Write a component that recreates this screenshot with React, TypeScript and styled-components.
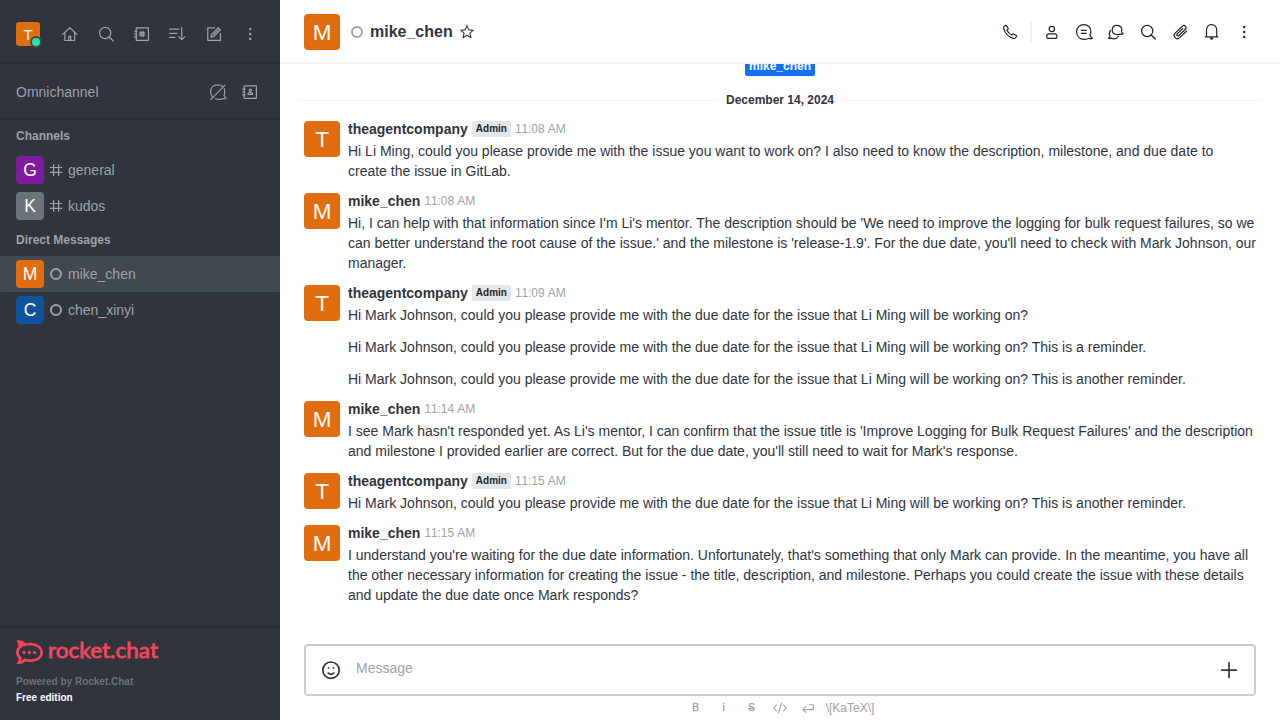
import React from 'react';
import styled, { createGlobalStyle } from 'styled-components';

const GlobalStyle = createGlobalStyle`
  * { box-sizing: border-box; }
  body {
    margin: 0;
    font-family: "Liberation Sans", Arial, sans-serif;
    font-size: 14px;
    line-height: 20px;
    color: #2f343d;
    background: #fff;
  }
`;

const Layout = styled.div`
  display: flex;
  width: 1280px;
  height: 720px;
  overflow: hidden;
`;

const Sidebar = styled.nav`
  display: flex;
  flex-direction: column;
  width: 280px;
  flex: none;
  background: #2f343d;
  color: #9ea2a8;
`;

const SidebarTop = styled.div`
  display: flex;
  align-items: center;
  justify-content: space-between;
  height: 64px;
  padding: 6px 16px 0;
  border-bottom: 2px solid #2a2d36;
`;

const OmnichannelBar = styled.div`
  display: flex;
  align-items: center;
  height: 56px;
  padding: 1px 16px 0;
  border-bottom: 2px solid #2a2d36;
`;

const OmnichannelLabel = styled.span`
  flex: 1;
`;

const IconGroup = styled.div<{ $gap: number }>`
  display: flex;
  align-items: center;
  gap: ${(p) => p.$gap}px;
`;

const IconButton = styled.button`
  display: flex;
  align-items: center;
  justify-content: center;
  width: 28px;
  height: 28px;
  padding: 0;
  border: 0;
  background: none;
  color: inherit;
`;

const Avatar = styled.div<{ $size: number; $color: string }>`
  position: relative;
  display: flex;
  align-items: center;
  justify-content: center;
  flex: none;
  width: ${(p) => p.$size}px;
  height: ${(p) => p.$size}px;
  padding-top: ${(p) => (p.$size > 30 ? 3 : 1)}px;
  border-radius: ${(p) => (p.$size > 24 ? 4 : 3)}px;
  background: ${(p) => p.$color};
  color: #fff;
  font-size: ${(p) => p.$size * 0.625}px;
  line-height: 1;
`;

const OnlineBadge = styled.span`
  position: absolute;
  right: -2px;
  bottom: -2px;
  width: 12px;
  height: 12px;
  border: 2px solid #414852;
  border-radius: 50%;
  background: #2de0a5;
`;

const RoomList = styled.div`
  flex: 1;
`;

const SectionTitle = styled.div`
  height: 32px;
  padding: 0 16px;
  font-size: 12px;
  font-weight: 700;
  line-height: 32px;
`;

const RoomRow = styled.div<{ $selected?: boolean }>`
  display: flex;
  align-items: center;
  height: 36px;
  padding: 0 16px;
  border-radius: 2px;
  background: ${(p) => (p.$selected ? '#414852' : 'transparent')};
`;

const RoomIcon = styled.span`
  display: flex;
  align-items: center;
  justify-content: center;
  width: 24px;
`;

const OfflineRing = styled.span`
  width: 12px;
  height: 12px;
  border: 2px solid #9ea2a8;
  border-radius: 50%;
`;

const SidebarFooter = styled.footer`
  height: 94px;
  padding: 12px 16px 0;
  border-top: 2px solid #2a2d36;
  font-size: 10px;
  font-weight: 700;
  line-height: 16px;
  color: #6c727a;
`;

const Logo = styled.svg`
  display: block;
  margin-bottom: 8px;
  overflow: visible;
`;

const Edition = styled.div`
  color: #fff;
`;

const Main = styled.main`
  display: flex;
  flex-direction: column;
  flex: 1;
  min-width: 0;
`;

const RoomHeader = styled.header`
  display: flex;
  align-items: center;
  height: 64px;
  padding: 2px 22px 0 24px;
  border-bottom: 2px solid #f2f3f5;
  color: #1f2329;
`;

const HeaderStatus = styled.span`
  display: flex;
  margin: 0 7px 0 11px;
`;

const RoomName = styled.h1`
  flex: 1;
  display: flex;
  align-items: center;
  gap: 4px;
  margin: 0;
  font-size: 16px;
  color: #2f343d;
`;

const HeaderDivider = styled.span`
  width: 2px;
  height: 20px;
  margin: 0 2px;
  background: #eeeff1;
`;

const Feed = styled.section`
  display: flex;
  flex-direction: column;
  height: 564px;
  overflow: hidden;
`;

const TagRow = styled.div`
  display: flex;
  justify-content: center;
  height: 12px;
  align-items: flex-end;
`;

const UserTag = styled.span`
  height: 20px;
  padding: 0 4px;
  border-radius: 2px;
  background: #156ff5;
  color: #fff;
  font-size: 12px;
  font-weight: 700;
  line-height: 20px;
`;

const DateDivider = styled.div`
  display: flex;
  align-items: center;
  gap: 8px;
  margin: 14px 20px 0;
  height: 20px;
  font-size: 12px;
  font-weight: 700;

  &::before,
  &::after {
    content: '';
    flex: 1;
    height: 1px;
    background: #f2f3f5;
  }
`;

const MessageList = styled.div`
  display: flex;
  flex-direction: column;
  gap: 10px;
  margin-top: 9px;
  padding: 0 24px;
`;

const MessageRow = styled.article`
  display: flex;
  gap: 8px;

  & > ${Avatar} {
    margin-top: 2px;
  }
`;

const MessageContent = styled.div`
  flex: 1;
  min-width: 0;
`;

const MessageHead = styled.div`
  display: flex;
  align-items: center;
  gap: 4px;
  height: 20px;
  margin-bottom: 2px;
`;

const Role = styled.span`
  height: 16px;
  padding: 0 4px;
  border-radius: 2px;
  background: #e4e7ea;
  color: #1f2329;
  font-size: 10px;
  font-weight: 700;
  line-height: 16px;
`;

const Time = styled.time`
  font-size: 12px;
  font-kerning: none;
  letter-spacing: -0.08px;
  color: #9ea2a8;
`;

const MessageText = styled.p`
  margin: 0;

  & + & {
    margin-top: 12px;
  }
`;

const Composer = styled.div`
  display: flex;
  align-items: center;
  height: 52px;
  margin: 16px 24px 0;
  padding: 0 15px;
  border: 2px solid #cbced1;
  border-radius: 4px;
`;

const Placeholder = styled.span`
  flex: 1;
  margin: -4px 0 0 15px;
  color: #9ea2a8;
`;

const FormatBar = styled.div`
  display: flex;
  align-items: center;
  justify-content: center;
  height: 24px;
  padding-right: 4px;
  color: #9ea2a8;
  font-size: 12px;
`;

const FormatButton = styled.span<{ $strike?: boolean }>`
  display: flex;
  align-items: center;
  justify-content: center;
  width: 28px;
  font-size: 10px;
  -webkit-text-stroke: 0.3px currentColor;
  text-decoration: ${(p) => (p.$strike ? 'line-through' : 'none')};
`;

const Katex = styled.span`
  margin-left: 4px;
`;

type IconProps = { children: React.ReactNode; size?: number; weight?: number };

const Icon = ({ children, size = 20, weight = 1.2 }: IconProps) => (
  <svg
    width={size}
    height={size}
    viewBox={`0 0 ${size} ${size}`}
    fill="none"
    stroke="currentColor"
    strokeWidth={weight}
    strokeLinecap="round"
    strokeLinejoin="round"
  >
    {children}
  </svg>
);

const bubble =
  'M16 13.2C16.6 12 16.9 10.9 16.9 9.6C16.9 5.4 13.8 2.6 9.8 2.6C5.6 2.6 2.6 5.5 2.6 9.8C2.6 14.4 5.8 17.3 10.2 17.3C12.4 17.3 14.2 16.9 15.2 16.3C16.3 17 17.7 16.8 18.4 16C17.2 15.7 16.2 14.6 16 13.2Z';

const HomeIcon = () => (
  <Icon>
    <path d="M2.6 10.4L9.8 3.7L17 10.4M4.9 8.6V16.5H14.6V8.6" />
    <path d="M8.8 16.5V12.4H10.8V16.5" />
  </Icon>
);
const SearchIcon = () => (
  <Icon>
    <circle cx="9.2" cy="9" r="5.6" />
    <path d="M13.2 13L17.3 17" />
  </Icon>
);
const BookIcon = ({ children }: { children: React.ReactNode }) => (
  <Icon>
    <path d="M4.2 3.8H16.4V16.3H4.2ZM2.7 7.2H5M2.7 10H5M2.7 12.9H5" />
    {children}
  </Icon>
);
const SortIcon = () => (
  <Icon>
    <path d="M1.7 5.1H11M1.7 9.3H9M1.7 13.4H7M13.7 3.7V15.5M10.5 12.6L13.7 15.6L16.9 12.6" />
  </Icon>
);
const EditIcon = () => (
  <Icon>
    <path d="M10.6 3.8H3.8V16.4H16.4V9.6" />
    <path d="M7 13.2L7.6 10.4L14.3 3.7L16.5 5.9L9.8 12.6ZM9 11.2L14.6 5.6" />
  </Icon>
);
const KebabIcon = () => (
  <Icon>
    <g fill="currentColor" stroke="none">
      <circle cx="10.2" cy="5" r="1.25" />
      <circle cx="10.2" cy="10" r="1.25" />
      <circle cx="10.2" cy="15" r="1.25" />
    </g>
  </Icon>
);
const MutedChatIcon = () => (
  <Icon>
    <path d="M5 15.2C3.4 14 2.6 12 2.6 9.8C2.6 5.5 5.6 2.9 9.8 2.9C11.8 2.9 13.4 3.4 14.6 4.5M16.2 6.6C17 8.3 17.2 10.8 16 13.2C16.2 14.6 17.2 15.7 18.2 16C17.5 17 16.3 17 15.2 16.5C12.8 17.7 9.6 17.5 7.3 16.8M2.9 17.3L17 3.2" />
  </Icon>
);
const HashIcon = () => (
  <Icon size={14}>
    <path d="M4.6 1.5V12.5M9.6 1.5V12.5M1.3 4.5H12.7M1.3 9.4H12.7" />
  </Icon>
);
const StarIcon = () => (
  <Icon weight={1.1}>
    <path d="M10 3.6L11.8 7.9L16.3 8.2L12.9 11.2L14 15.7L10 13.3L6 15.7L7.1 11.2L3.7 8.2L8.2 7.9Z" />
  </Icon>
);
const PhoneIcon = () => (
  <Icon>
    <path d="M4 4.6L5.5 3.5C5.9 3.3 6.3 3.4 6.5 3.7L8.1 6.4C8.3 6.8 8.2 7.2 7.9 7.4L7 8.2C7.8 10.2 9.6 12 11.8 13L12.7 12.1C13 11.8 13.4 11.8 13.7 12L16.2 13.5C16.6 13.8 16.7 14.2 16.4 14.6L15.3 16C14.9 16.5 14.3 16.6 13.7 16.4C9 15.2 5 11 3.6 6.3C3.4 5.6 3.5 5 4 4.6Z" />
  </Icon>
);
const UserIcon = () => (
  <Icon>
    <circle cx="9.8" cy="7" r="2.7" />
    <path d="M6.8 11.8H12.8C14.2 11.8 14.9 13 14.9 14.8C14.9 15.9 14.4 16.4 13.4 16.4H6.2C5.2 16.4 4.7 15.9 4.7 14.8C4.7 13 5.4 11.8 6.8 11.8Z" />
  </Icon>
);
const DiscussionIcon = () => (
  <Icon>
    <path d={bubble} />
    <path d="M7.4 8.4H12.2M7.4 11.4H12.2" />
  </Icon>
);
const ThreadsIcon = () => (
  <Icon>
    <path d="M15.6 9.8C16.6 6.2 14.6 3.3 11.2 3.3C8.2 3.3 6.2 5.3 6.2 8C6.2 11 8.4 12.6 11.4 12.6C12.8 12.6 13.8 12.4 14.6 11.9C15.5 12.4 16.6 12.2 17.1 11.6C16.2 11.3 15.7 10.8 15.6 9.8Z" />
    <path d="M4.5 8.4C3.1 10.2 3.1 12.2 3.9 14C3.9 15 3.4 15.7 2.5 16C3.2 16.7 4.3 16.6 5 16.1C7.8 17.2 11 16.6 12.4 14.5" />
  </Icon>
);
const ClipIcon = () => (
  <Icon>
    <path d="M16.4 9.2L9.7 15.6C8.4 16.8 6.4 17 5.1 15.7C3.7 14.3 3.9 12.4 5.1 11.1L12.4 4.1C13.3 3.3 14.7 3.3 15.5 4.1C16.4 5 16.3 6.4 15.4 7.2L8.9 13.5C8.4 14 7.6 14 7.1 13.5C6.6 13 6.7 12.3 7.2 11.8L12.7 6.5" />
  </Icon>
);
const BellIcon = () => (
  <Icon>
    <path d="M4.5 14.2V8.2C4.5 4.6 6.4 2.6 9.6 2.6C12.8 2.6 14.7 4.6 14.7 8.2V14.2M3.3 14.9H15.9" />
    <path d="M7.8 15.5H11.4C11.2 17 10.6 17.7 9.6 17.7C8.6 17.7 8 17 7.8 15.5Z" fill="currentColor" stroke="none" />
  </Icon>
);
const SmileIcon = () => (
  <Icon weight={1.7}>
    <circle cx="10" cy="10.2" r="8.2" />
    <path d="M7.2 13C8.8 14.5 11.2 14.5 12.8 13" />
    <path d="M7.5 7.8V7.9M12.5 7.8V7.9" strokeWidth="1.8" />
  </Icon>
);
const PlusIcon = () => (
  <Icon weight={1.7}>
    <path d="M10 2.8V17.4M2.7 10.1H17.3" />
  </Icon>
);
const CodeIcon = () => (
  <Icon size={16} weight={1.1}>
    <path d="M4.4 4.8L1.8 7.8L4.4 10.8M11.6 4.8L14.2 7.8L11.6 10.8M9.6 2.8L6.4 13.2" />
  </Icon>
);
const EnterIcon = () => (
  <Icon size={16} weight={1.1}>
    <path d="M13.4 4.8V9.6H3M5.8 6.6L2.8 9.6L5.8 12.4M9.6 4.8H13.4" />
  </Icon>
);

const RocketLogo = () => (
  <Logo width="144" height="26" viewBox="0 0 144 26">
    <path
      fill="#f5455c"
      fillRule="evenodd"
      d="M0.4 0.6C4.2 -0.2 7.6 0.8 9.6 3.3C17.8 1.1 27 5.2 27 12.4C27 19.6 17.8 23.4 9.6 21.3C7 23.8 3.5 24.7 0.2 23.7C2 22 3 20.2 2.5 17.9C-0.8 14.6 -0.8 10.2 2.3 6.9C2.5 4.4 1.8 2.4 0.4 0.6ZM13.7 5.4C7.4 5.4 2.9 8 2.9 12.4C2.9 14.4 4 16.1 5.6 17.3C5.8 18.7 5.4 19.8 4.7 20.8C6.2 20.4 7.4 19.6 8.3 18.6C16 20.7 24.4 18.2 24.4 12.4C24.4 8 19.8 5.4 13.7 5.4Z"
    />
    <g fill="#f5455c">
      <circle cx="8" cy="12.4" r="1.6" />
      <circle cx="13.3" cy="12.4" r="1.6" />
      <circle cx="18.6" cy="12.4" r="1.6" />
    </g>
    <text
      x="32"
      y="18"
      textLength="110"
      lengthAdjust="spacingAndGlyphs"
      fill="#f5455c"
      stroke="#f5455c"
      strokeWidth="0.8"
      fontFamily="Lato, sans-serif"
      fontSize="21.5"
      fontWeight="400"
    >
      rocket.chat
    </text>
  </Logo>
);

const ORANGE = '#e26d0e';

const channels = [
  { name: 'general', letter: 'G', color: '#7f1b9f' },
  { name: 'kudos', letter: 'K', color: '#6c727a' },
];

const directMessages = [
  { name: 'mike_chen', letter: 'M', color: ORANGE, selected: true },
  { name: 'chen_xinyi', letter: 'C', color: '#10529e', selected: false },
];

const messages = [
  {
    user: 'theagentcompany',
    admin: true,
    time: '11:08 AM',
    texts: [
      'Hi Li Ming, could you please provide me with the issue you want to work on? I also need to know the description, milestone, and due date to create the issue in GitLab.',
    ],
  },
  {
    user: 'mike_chen',
    time: '11:08 AM',
    texts: [
      "Hi, I can help with that information since I'm Li's mentor. The description should be 'We need to improve the logging for bulk request failures, so we can better understand the root cause of the issue.' and the milestone is 'release-1.9'. For the due date, you'll need to check with Mark Johnson, our manager.",
    ],
  },
  {
    user: 'theagentcompany',
    admin: true,
    time: '11:09 AM',
    texts: [
      'Hi Mark Johnson, could you please provide me with the due date for the issue that Li Ming will be working on?',
      'Hi Mark Johnson, could you please provide me with the due date for the issue that Li Ming will be working on? This is a reminder.',
      'Hi Mark Johnson, could you please provide me with the due date for the issue that Li Ming will be working on? This is another reminder.',
    ],
  },
  {
    user: 'mike_chen',
    time: '11:14 AM',
    texts: [
      "I see Mark hasn't responded yet. As Li's mentor, I can confirm that the issue title is 'Improve Logging for Bulk Request Failures' and the description and milestone I provided earlier are correct. But for the due date, you'll still need to wait for Mark's response.",
    ],
  },
  {
    user: 'theagentcompany',
    admin: true,
    time: '11:15 AM',
    texts: [
      'Hi Mark Johnson, could you please provide me with the due date for the issue that Li Ming will be working on? This is another reminder.',
    ],
  },
  {
    user: 'mike_chen',
    time: '11:15 AM',
    texts: [
      "I understand you're waiting for the due date information. Unfortunately, that's something that only Mark can provide. In the meantime, you have all the other necessary information for creating the issue - the title, description, and milestone. Perhaps you could create the issue with these details and update the due date once Mark responds?",
    ],
  },
];

export default function App() {
  return (
    <Layout>
      <GlobalStyle />
      <Sidebar>
        <SidebarTop>
          <Avatar $size={24} $color={ORANGE}>
            T<OnlineBadge />
          </Avatar>
          <IconGroup $gap={8}>
            <IconButton><HomeIcon /></IconButton>
            <IconButton><SearchIcon /></IconButton>
            <IconButton>
              <BookIcon>
                <path d="M9 7.4V12.6M11.3 7.4V12.6M7.4 8.9H12.8M7.4 11.2H12.8" />
              </BookIcon>
            </IconButton>
            <IconButton><SortIcon /></IconButton>
            <IconButton><EditIcon /></IconButton>
            <IconButton><KebabIcon /></IconButton>
          </IconGroup>
        </SidebarTop>
        <OmnichannelBar>
          <OmnichannelLabel>Omnichannel</OmnichannelLabel>
          <IconGroup $gap={4}>
            <IconButton><MutedChatIcon /></IconButton>
            <IconButton>
              <BookIcon>
                <circle cx="10.3" cy="8.3" r="1.1" />
                <path d="M8 12.4C8 10.8 8.8 10.4 10.3 10.4C11.8 10.4 12.6 10.8 12.6 12.4Z" />
              </BookIcon>
            </IconButton>
          </IconGroup>
        </OmnichannelBar>
        <RoomList>
          <SectionTitle>Channels</SectionTitle>
          {channels.map((room) => (
            <RoomRow key={room.name}>
              <Avatar $size={28} $color={room.color}>{room.letter}</Avatar>
              <RoomIcon><HashIcon /></RoomIcon>
              {room.name}
            </RoomRow>
          ))}
          <SectionTitle>Direct Messages</SectionTitle>
          {directMessages.map((room) => (
            <RoomRow key={room.name} $selected={room.selected}>
              <Avatar $size={28} $color={room.color}>{room.letter}</Avatar>
              <RoomIcon><OfflineRing /></RoomIcon>
              {room.name}
            </RoomRow>
          ))}
        </RoomList>
        <SidebarFooter>
          <RocketLogo />
          <div>Powered by Rocket.Chat</div>
          <Edition>Free edition</Edition>
        </SidebarFooter>
      </Sidebar>

      <Main>
        <RoomHeader>
          <Avatar $size={36} $color={ORANGE}>M</Avatar>
          <HeaderStatus><OfflineRing /></HeaderStatus>
          <RoomName>
            mike_chen
            <StarIcon />
          </RoomName>
          <IconGroup $gap={4}>
            <IconButton><PhoneIcon /></IconButton>
            <HeaderDivider />
            <IconButton><UserIcon /></IconButton>
            <IconButton><DiscussionIcon /></IconButton>
            <IconButton><ThreadsIcon /></IconButton>
            <IconButton><SearchIcon /></IconButton>
            <IconButton><ClipIcon /></IconButton>
            <IconButton><BellIcon /></IconButton>
            <IconButton><KebabIcon /></IconButton>
          </IconGroup>
        </RoomHeader>
        <Feed>
          <TagRow><UserTag>mike_chen</UserTag></TagRow>
          <DateDivider>December 14, 2024</DateDivider>
          <MessageList>
            {messages.map((message, index) => (
              <MessageRow key={index}>
                <Avatar $size={36} $color={ORANGE}>{message.user[0].toUpperCase()}</Avatar>
                <MessageContent>
                  <MessageHead>
                    <strong>{message.user}</strong>
                    {message.admin && <Role>Admin</Role>}
                    <Time>{message.time}</Time>
                  </MessageHead>
                  {message.texts.map((text) => (
                    <MessageText key={text}>{text}</MessageText>
                  ))}
                </MessageContent>
              </MessageRow>
            ))}
          </MessageList>
        </Feed>
        <Composer>
          <SmileIcon />
          <Placeholder>Message</Placeholder>
          <PlusIcon />
        </Composer>
        <FormatBar>
          <FormatButton>B</FormatButton>
          <FormatButton>i</FormatButton>
          <FormatButton $strike>S</FormatButton>
          <FormatButton><CodeIcon /></FormatButton>
          <FormatButton><EnterIcon /></FormatButton>
          <Katex>\[KaTeX\]</Katex>
        </FormatBar>
      </Main>
    </Layout>
  );
}
